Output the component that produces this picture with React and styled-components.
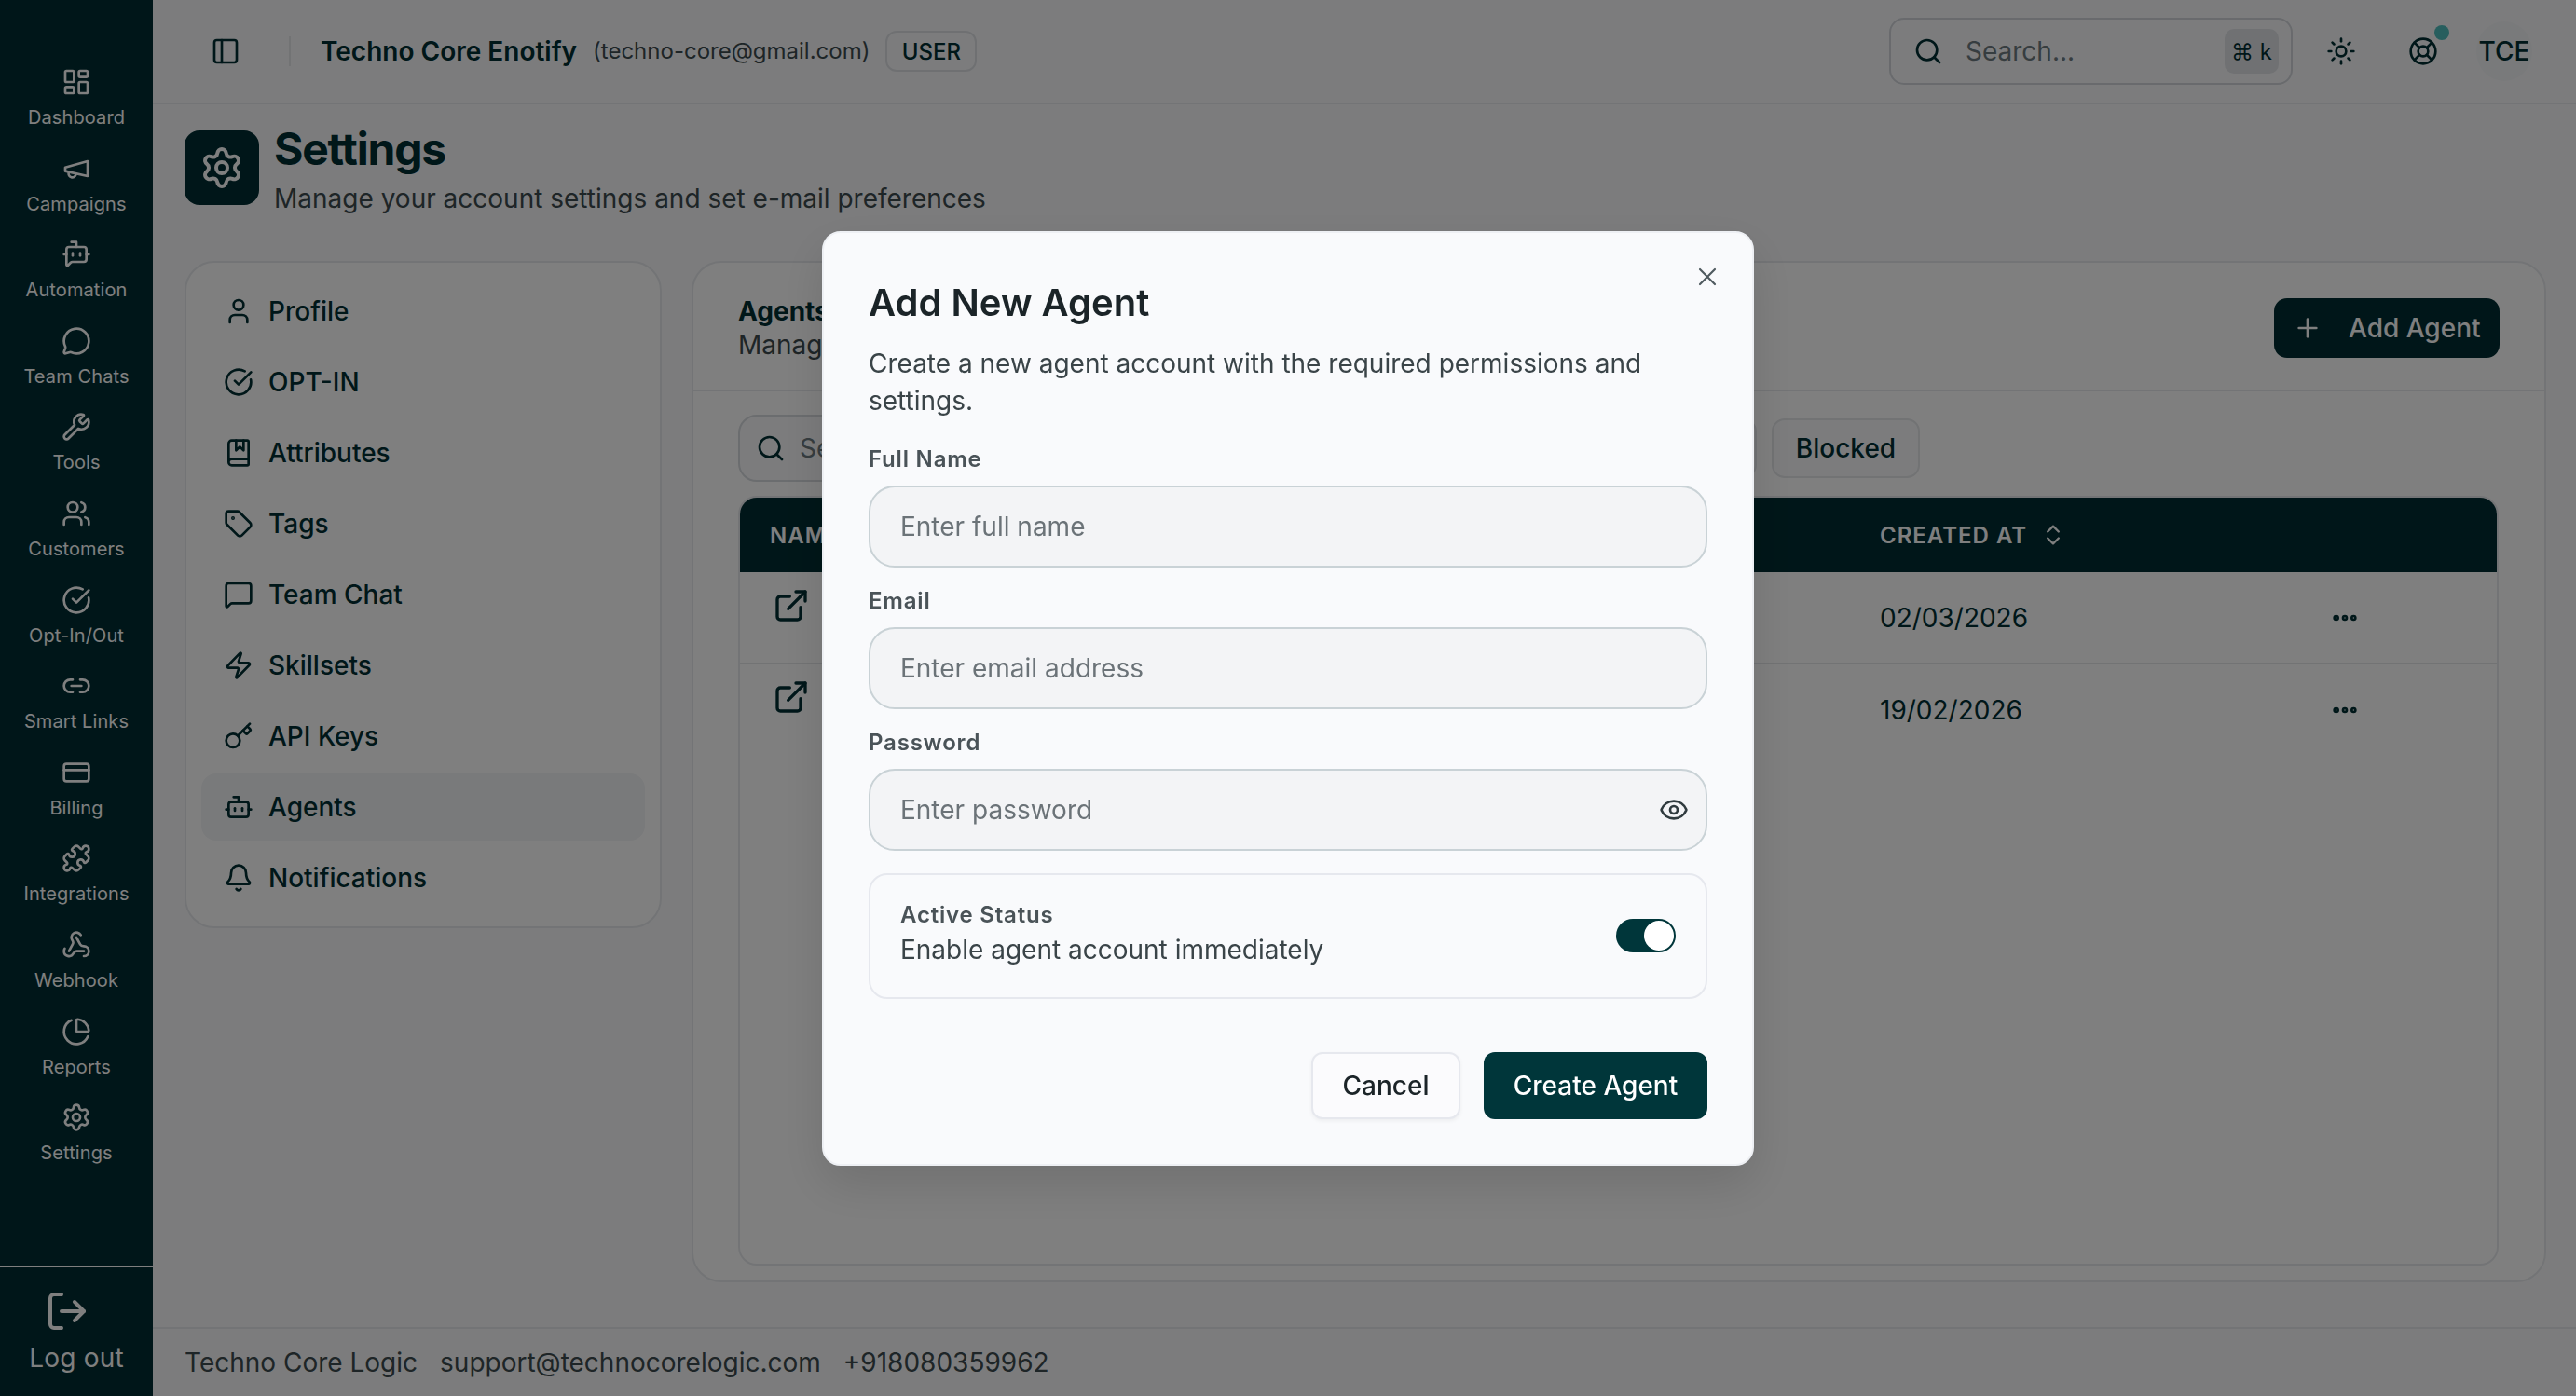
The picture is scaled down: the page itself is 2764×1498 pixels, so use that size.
import React from 'react';
import styled, { createGlobalStyle } from 'styled-components';
import {
  LayoutDashboard, BotMessageSquare, MessageCircle, Wrench, Users, CircleCheckBig, Link2,
  CreditCard, Puzzle, Webhook, ChartPie, Settings, LogOut, PanelLeft, Search, Sun, LifeBuoy, User,
  BookMarked, Tag, MessageSquare, Zap, Key, Bot, Bell, Plus, ExternalLink, ChevronsUpDown, MoreHorizontal,
  X, Eye,
} from 'lucide-react';

const Global = createGlobalStyle`
  * { box-sizing: border-box; }
  html, body { margin: 0; padding: 0; height: 100%; }
  body { font-family: Inter, "Liberation Sans", sans-serif; background: #f8f9fb; color: #002e33; overflow: hidden; }
  #root { height: 100%; }
`;

const MegaphoneIcon = ({ size = 32 }) => (
  <svg width={size} height={size} viewBox="0 0 24 24" fill="none" stroke="currentColor" strokeWidth="2" strokeLinecap="round" strokeLinejoin="round">
    <path d="m3 11 18-5v12L3 14v-3z" />
    <path d="M11.6 16.8a3 3 0 1 1-5.8-1.6" />
  </svg>
);

const Page = styled.div`
  display: flex;
  width: 2764px;
  height: 1498px;
  overflow: hidden;
`;

const Sidebar = styled.aside`
  flex: 0 0 164px;
  display: flex;
  flex-direction: column;
  background: #002d32;
  color: #fff;
`;

const SideNav = styled.nav`
  flex: 1;
  display: flex;
  flex-direction: column;
  gap: 23.6px;
  padding-top: 72px;
`;

const SideItem = styled.a`
  display: flex;
  flex-direction: column;
  align-items: center;
  gap: 7px;
  font-size: 20px;
  line-height: 30px;
  letter-spacing: 0.1px;
  color: #fff;
`;

const SideFoot = styled.div`
  height: 140px;
  border-top: 2px solid #fff;
  display: flex;
  flex-direction: column;
  align-items: center;
  padding-top: 23px;
  font-size: 28px;
  line-height: 40px;
  letter-spacing: 0.2px;
  svg { margin-right: 20px; margin-bottom: 6px; }
`;

const Main = styled.div`
  flex: 1;
  min-width: 0;
  display: flex;
  flex-direction: column;
`;

const TopBar = styled.header`
  flex: 0 0 112px;
  display: flex;
  align-items: center;
  padding: 0 47px 0 62px;
  border-bottom: 2px solid #e7e9ec;
`;

const TopDivider = styled.span`
  width: 2px;
  height: 32px;
  background: #e4e6e9;
  margin: 0 32px 0 52px;
`;

const OrgName = styled.span`
  font-size: 28px;
  font-weight: 600;
  line-height: 40px;
  color: #002e33;
`;

const OrgMail = styled.span`
  font-size: 24px;
  line-height: 40px;
  color: #3c4a4e;
  margin-left: 17px;
`;

const RoleBadge = styled.span`
  margin-left: 17px;
  width: 98px;
  height: 44px;
  display: flex;
  align-items: center;
  justify-content: center;
  border: 2px solid #dfe1e5;
  border-radius: 12px;
  font-size: 24px;
  font-weight: 500;
  color: #002e33;
`;

const TopRight = styled.div`
  margin-left: auto;
  display: flex;
  align-items: center;
`;

const TopSearch = styled.div`
  width: 433px;
  height: 72px;
  display: flex;
  align-items: center;
  border: 2px solid #d2d5da;
  border-radius: 16px;
  padding: 0 13px 0 24px;
  background: #f8f9fb;
  color: #002e33;
`;

const SearchHint = styled.span`
  margin-left: 24px;
  font-size: 28px;
  color: #6d7a80;
`;

const Kbd = styled.kbd`
  margin-left: auto;
  width: 58px;
  height: 48px;
  display: flex;
  align-items: center;
  justify-content: center;
  border-radius: 10px;
  background: #e0e2e6;
  font-family: Inter, "DejaVu Sans", sans-serif;
  font-size: 24px;
  color: #002e33;
`;

const IconBtn = styled.span`
  position: relative;
  width: 64px;
  height: 64px;
  display: flex;
  align-items: center;
  justify-content: center;
  color: #002e33;
  margin-left: ${(p) => p.$ml || 0}px;
`;

const StatusDot = styled.span`
  position: absolute;
  top: 4px;
  right: 4px;
  width: 16px;
  height: 16px;
  border-radius: 50%;
  background: #4fbcbc;
`;

const Avatar = styled.span`
  margin-left: 25px;
  width: 60px;
  height: 64px;
  border-radius: 50%;
  background: #f3f4f6;
  display: flex;
  align-items: center;
  justify-content: center;
  font-size: 28px;
  font-weight: 500;
  color: #002e33;
`;

const Content = styled.main`
  flex: 1;
  min-height: 0;
  display: flex;
  flex-direction: column;
  padding: 20px 32px 48px 34px;
`;

const PageHead = styled.div`
  flex: 0 0 102px;
  display: flex;
  gap: 16px;
  margin-bottom: 46px;
`;

const PageIcon = styled.div`
  width: 80px;
  height: 80px;
  margin-top: 8px;
  border-radius: 16px;
  background: #002d32;
  color: #fff;
  display: flex;
  align-items: center;
  justify-content: center;
`;

const PageTitle = styled.h1`
  margin: 0 0 4px;
  font-size: 48px;
  line-height: 56px;
  font-weight: 700;
  letter-spacing: -1.2px;
  color: #002e33;
`;

const PageSub = styled.p`
  margin: 0;
  font-size: 28px;
  line-height: 42px;
  color: #3c4a4e;
`;

const Columns = styled.div`
  flex: 1;
  min-height: 0;
  display: flex;
  align-items: flex-start;
  gap: 32px;
`;

const MenuCard = styled.nav`
  flex: 0 0 512px;
  display: flex;
  flex-direction: column;
  gap: 4px;
  padding: 16px;
  border: 2px solid #e7e9ec;
  border-radius: 32px;
  background: #fff;
`;

const MenuItem = styled.a`
  height: 72px;
  display: flex;
  align-items: center;
  gap: 16px;
  padding: 0 24px;
  border-radius: 16px;
  font-size: 28px;
  font-weight: 500;
  color: #002e33;
  background: ${(p) => (p.$active ? '#f3f4f6' : 'transparent')};
`;

const Panel = styled.section`
  flex: 1;
  align-self: stretch;
  min-width: 0;
  display: flex;
  flex-direction: column;
  border: 2px solid #e7e9ec;
  border-radius: 32px;
  background: #fff;
`;

const PanelHead = styled.div`
  flex: 0 0 138px;
  display: flex;
  align-items: center;
  justify-content: space-between;
  padding: 4px 48px 0 48px;
  border-bottom: 2px solid #e7e9ec;
`;

const PanelTitle = styled.div`
  font-size: 28px;
  line-height: 36px;
  font-weight: 700;
  color: #002e33;
`;

const PanelSub = styled.div`
  font-size: 28px;
  line-height: 36px;
  color: #3c4a4e;
`;

const AddButton = styled.button`
  width: 242px;
  height: 64px;
  display: flex;
  align-items: center;
  gap: 28px;
  padding: 0 20px;
  border: 0;
  border-radius: 14px;
  background: #002d32;
  color: #fff;
  font: 500 28px Inter, sans-serif;
`;

const PanelBody = styled.div`
  flex: 1;
  min-height: 0;
  display: flex;
  flex-direction: column;
  padding: 25px 49px 16px 48px;
`;

const Filters = styled.div`
  flex: 0 0 72px;
  display: flex;
  align-items: center;
  gap: 16px;
  margin-bottom: 15px;
`;

const FilterSearch = styled.div`
  flex: 0 0 665px;
  height: 72px;
  display: flex;
  align-items: center;
  gap: 15px;
  padding: 0 17px;
  border: 2px solid #d7dade;
  border-radius: 20px;
  background: #f8f9fb;
  font-size: 28px;
  color: #6d7a80;
  svg { color: #002e33; }
`;

const FilterChip = styled.button`
  width: ${(p) => p.$w}px;
  height: 64px;
  padding: 0;
  border: 2px solid #e4e6e9;
  border-radius: 14px;
  background: #f8f9fb;
  color: #002e33;
  font: 500 28px Inter, sans-serif;
`;

const Table = styled.div`
  flex: 1;
  min-height: 0;
  display: flex;
  flex-direction: column;
  border: 2px solid #e7e9ec;
  border-radius: 20px;
  overflow: hidden;
`;

const HeadRow = styled.div`
  flex: 0 0 80px;
  display: grid;
  grid-template-columns: 1191px 483px 32px;
  align-items: center;
  padding: 0 32px;
  background: #002d32;
  color: #fff;
  font-size: 24px;
  font-weight: 600;
  letter-spacing: 1px;
`;

const SortCell = styled.span`
  display: flex;
  align-items: center;
  gap: 14px;
`;

const BodyRow = styled.div`
  flex: 0 0 98px;
  display: grid;
  grid-template-columns: 1191px 483px 32px;
  align-items: center;
  padding: 1px 32px 0;
  font-size: 28px;
  color: #002e33;
  border-bottom: ${(p) => (p.$last ? '0' : '1px solid #e4e6e9')};
`;

const LinkCell = styled.span`
  align-self: start;
  margin: 15px 0 0 3px;
  height: 40px;
`;

const Footer = styled.footer`
  flex: 0 0 74px;
  display: flex;
  align-items: center;
  gap: 24px;
  padding: 0 34px 0;
  border-top: 2px solid #e7e9ec;
  font-size: 28px;
  color: #3c4a4e;
`;

const Overlay = styled.div`
  position: fixed;
  inset: 0;
  z-index: 10;
  display: flex;
  align-items: center;
  justify-content: center;
  background: rgba(0, 0, 0, 0.5);
`;

const Modal = styled.div`
  position: relative;
  width: 1000px;
  height: 1003px;
  display: flex;
  flex-direction: column;
  padding: 46px 48px 48px;
  border: 2px solid #eef0f4;
  border-radius: 20px;
  background: #f9fafc;
  box-shadow: 0 20px 50px rgba(0, 0, 0, 0.12);
`;

const CloseBtn = styled.span`
  position: absolute;
  top: 31px;
  right: 32px;
  color: #4f5a5f;
  display: flex;
`;

const ModalTitle = styled.h2`
  margin: 0 0 16px;
  font-size: 40px;
  line-height: 58px;
  font-weight: 600;
  color: #1b2428;
`;

const ModalDesc = styled.p`
  margin: 0 0 27px;
  font-size: 28px;
  line-height: 40px;
  color: #3a4448;
`;

const Field = styled.div`
  display: flex;
  flex-direction: column;
  gap: 12px;
  margin-bottom: 20px;
`;

const FieldLabel = styled.label`
  font-size: 24px;
  line-height: 32px;
  font-weight: 600;
  letter-spacing: 0.8px;
  color: #4a5358;
`;

const InputBox = styled.div`
  height: 88px;
  display: flex;
  align-items: center;
  justify-content: space-between;
  padding: 0 18px 0 32px;
  border: 2px solid #c9d2d6;
  border-radius: 28px;
  background: #f3f4f6;
  font-size: 28px;
  color: #6b7378;
  svg { color: #2f3a3e; }
`;

const StatusBox = styled.div`
  height: 135px;
  margin-top: 4px;
  display: flex;
  align-items: center;
  justify-content: space-between;
  padding: 0 32px 0 32px;
  border: 2px solid #e6e8ee;
  border-radius: 20px;
`;

const StatusCopy = styled.div`
  padding-bottom: 4px;
`;

const StatusTitle = styled.div`
  font-size: 24px;
  line-height: 32px;
  font-weight: 600;
  letter-spacing: 0.8px;
  color: #4a5358;
  margin-bottom: 1px;
`;

const StatusText = styled.div`
  font-size: 28px;
  line-height: 40px;
  color: #3a4448;
`;

const Toggle = styled.span`
  width: 64px;
  height: 36px;
  padding: 2px;
  display: flex;
  justify-content: flex-end;
  border-radius: 18px;
  background: #00363a;
  &::after {
    content: '';
    width: 32px;
    height: 32px;
    border-radius: 50%;
    background: #fff;
  }
`;

const Actions = styled.div`
  margin-top: auto;
  display: flex;
  justify-content: flex-end;
  gap: 25px;
`;

const CancelBtn = styled.button`
  width: 160px;
  height: 72px;
  border: 2px solid #e6e8ee;
  border-radius: 12px;
  background: #fbfbfd;
  color: #1b2428;
  font: 500 28px Inter, sans-serif;
  box-shadow: 0 2px 4px rgba(0, 0, 0, 0.05);
`;

const CreateBtn = styled.button`
  width: 240px;
  height: 72px;
  border: 0;
  border-radius: 12px;
  background: #00363a;
  color: #fff;
  font: 500 28px Inter, sans-serif;
`;

const sideItems = [
  [LayoutDashboard, 'Dashboard'], [MegaphoneIcon, 'Campaigns'], [BotMessageSquare, 'Automation'],
  [MessageCircle, 'Team Chats'], [Wrench, 'Tools'], [Users, 'Customers'], [CircleCheckBig, 'Opt-In/Out'],
  [Link2, 'Smart Links'], [CreditCard, 'Billing'], [Puzzle, 'Integrations'], [Webhook, 'Webhook'],
  [ChartPie, 'Reports'], [Settings, 'Settings'],
];

const menuItems = [
  [User, 'Profile'], [CircleCheckBig, 'OPT-IN'], [BookMarked, 'Attributes'], [Tag, 'Tags'],
  [MessageSquare, 'Team Chat'], [Zap, 'Skillsets'], [Key, 'API Keys'], [Bot, 'Agents', true], [Bell, 'Notifications'],
];

const fields = [['Full Name', 'Enter full name'], ['Email', 'Enter email address'], ['Password', 'Enter password', true]];

export default function App() {
  return (
    <Page>
      <Global />
      <Sidebar>
        <SideNav>
          {sideItems.map(([Icon, label]) => (
            <SideItem key={label}><Icon size={32} />{label}</SideItem>
          ))}
        </SideNav>
        <SideFoot><LogOut size={48} />Log out</SideFoot>
      </Sidebar>
      <Main>
        <TopBar>
          <PanelLeft size={32} />
          <TopDivider />
          <OrgName>Techno Core Enotify</OrgName>
          <OrgMail>(techno-core@gmail.com)</OrgMail>
          <RoleBadge>USER</RoleBadge>
          <TopRight>
            <TopSearch>
              <Search size={32} />
              <SearchHint>Search...</SearchHint>
              <Kbd>⌘ k</Kbd>
            </TopSearch>
            <IconBtn $ml={20}><Sun size={32} /></IconBtn>
            <IconBtn $ml={24}><LifeBuoy size={32} /><StatusDot /></IconBtn>
            <Avatar>TCE</Avatar>
          </TopRight>
        </TopBar>
        <Content>
          <PageHead>
            <PageIcon><Settings size={48} /></PageIcon>
            <div>
              <PageTitle>Settings</PageTitle>
              <PageSub>Manage your account settings and set e-mail preferences</PageSub>
            </div>
          </PageHead>
          <Columns>
            <MenuCard>
              {menuItems.map(([Icon, label, active]) => (
                <MenuItem key={label} $active={active}><Icon size={32} />{label}</MenuItem>
              ))}
            </MenuCard>
            <Panel>
              <PanelHead>
                <div>
                  <PanelTitle>Agents</PanelTitle>
                  <PanelSub>Manage your agents</PanelSub>
                </div>
                <AddButton><Plus size={32} />Add Agent</AddButton>
              </PanelHead>
              <PanelBody>
                <Filters>
                  <FilterSearch><Search size={32} />Search agents</FilterSearch>
                  <FilterChip $w={88}>All</FilterChip>
                  <FilterChip $w={132}>Active</FilterChip>
                  <FilterChip $w={160}>Inactive</FilterChip>
                  <FilterChip $w={159}>Blocked</FilterChip>
                </Filters>
                <Table>
                  <HeadRow>
                    <span>NAME</span>
                    <SortCell>CREATED AT <ChevronsUpDown size={28} /></SortCell>
                  </HeadRow>
                  <BodyRow>
                    <LinkCell><ExternalLink size={40} /></LinkCell>
                    <span>02/03/2026</span>
                    <MoreHorizontal size={32} strokeWidth={3} />
                  </BodyRow>
                  <BodyRow $last>
                    <LinkCell><ExternalLink size={40} /></LinkCell>
                    <span>19/02/2026</span>
                    <MoreHorizontal size={32} strokeWidth={3} />
                  </BodyRow>
                </Table>
              </PanelBody>
            </Panel>
          </Columns>
        </Content>
        <Footer>
          <span>Techno Core Logic</span>
          <span>support@technocorelogic.com</span>
          <span>+918080359962</span>
        </Footer>
      </Main>
      <Overlay>
        <Modal>
          <CloseBtn><X size={32} strokeWidth={1.6} /></CloseBtn>
          <ModalTitle>Add New Agent</ModalTitle>
          <ModalDesc>Create a new agent account with the required permissions and settings.</ModalDesc>
          {fields.map(([label, hint, eye]) => (
            <Field key={label}>
              <FieldLabel>{label}</FieldLabel>
              <InputBox>{hint}{eye && <Eye size={32} />}</InputBox>
            </Field>
          ))}
          <StatusBox>
            <StatusCopy>
              <StatusTitle>Active Status</StatusTitle>
              <StatusText>Enable agent account immediately</StatusText>
            </StatusCopy>
            <Toggle />
          </StatusBox>
          <Actions>
            <CancelBtn>Cancel</CancelBtn>
            <CreateBtn>Create Agent</CreateBtn>
          </Actions>
        </Modal>
      </Overlay>
    </Page>
  );
}
